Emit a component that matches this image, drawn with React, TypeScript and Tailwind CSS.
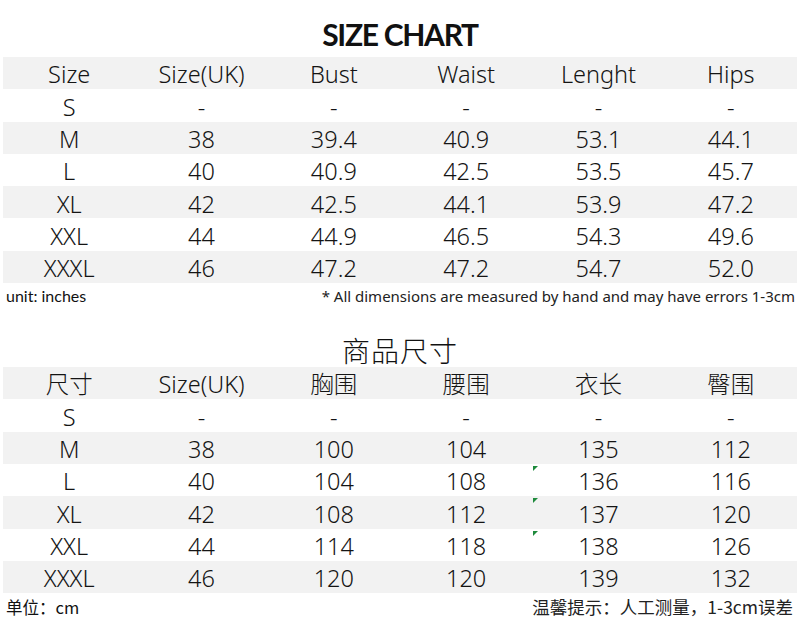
const heads = ["Size", "Size(UK)", "Bust", "Waist", "Lenght", "Hips"];
const cnHeads = ["尺寸", "Size(UK)", "胸围", "腰围", "衣长", "臀围"];

const inches = [
  ["S", "-", "-", "-", "-", "-"],
  ["M", "38", "39.4", "40.9", "53.1", "44.1"],
  ["L", "40", "40.9", "42.5", "53.5", "45.7"],
  ["XL", "42", "42.5", "44.1", "53.9", "47.2"],
  ["XXL", "44", "44.9", "46.5", "54.3", "49.6"],
  ["XXXL", "46", "47.2", "47.2", "54.7", "52.0"],
];

const cm = [
  ["S", "-", "-", "-", "-", "-"],
  ["M", "38", "100", "104", "135", "112"],
  ["L", "40", "104", "108", "136", "116"],
  ["XL", "42", "108", "112", "137", "120"],
  ["XXL", "44", "114", "118", "138", "126"],
  ["XXXL", "46", "120", "120", "139", "132"],
];

function Row({ cells, gray, marked }: { cells: string[]; gray: boolean; marked?: boolean }) {
  return (
    <div className={`grid grid-cols-6 h-[32.3px] items-center ${gray ? "bg-[#f2f2f2]" : "bg-white"}`}>
      {cells.map((c, i) => (
        <div key={i} className="relative h-full flex items-center justify-center pt-[4px]">
          {marked && i === 4 && (
            <span className="absolute left-[1px] top-[2px] w-0 h-0 border-t-[5px] border-t-[#1e8a3c] border-r-[5px] border-r-transparent" />
          )}
          <span className="leading-none">{c}</span>
        </div>
      ))}
    </div>
  );
}

function Table({ head, rows, marks }: { head: string[]; rows: string[][]; marks?: boolean }) {
  return (
    <div className="text-[23.5px] text-[#141414] font-['Noto_Sans','Noto_Sans_CJK_SC',sans-serif] font-light">
      <Row cells={head} gray />
      {rows.map((r, i) => (
        <Row key={i} cells={r} gray={i % 2 === 1} marked={marks && i >= 2 && i <= 4} />
      ))}
    </div>
  );
}

export default function App() {
  return (
    <div className="w-[800px] h-[624px] bg-white px-[3px] overflow-hidden">
      <div className="h-[57px] flex items-end justify-center pb-[8px]">
        <h1 className="text-[30px] leading-none font-bold text-[#111] font-['Lato','Liberation_Sans',sans-serif] tracking-[-1.3px]">
          SIZE CHART
        </h1>
      </div>

      <Table head={heads} rows={inches} />

      <div className="h-[26px] flex items-center justify-between pr-[2px]">
        <span className="pl-[3px] text-[16px] text-[#111] font-['Lato','Liberation_Sans',sans-serif]">unit: inches</span>
        <span className="text-[15px] text-[#222] font-['Noto_Sans',sans-serif]">* All dimensions are measured by hand and may have errors 1-3cm</span>
      </div>

      <div className="h-[58px] flex items-end justify-center pb-[3px]">
        <h2 className="text-[28px] leading-none text-[#111] font-['Noto_Sans_CJK_SC',serif] font-light tracking-[1px]">
          商品尺寸
        </h2>
      </div>

      <Table head={cnHeads} rows={cm} marks />

      <div className="h-[28px] flex items-center justify-between pr-[4px]">
        <span className="pl-[3px] text-[16.5px] text-[#111] font-['Noto_Sans_CJK_SC',sans-serif]">单位：cm</span>
        <span className="text-[17.5px] text-[#222] font-['Noto_Sans_CJK_SC',sans-serif]">温馨提示：人工测量，1-3cm误差</span>
      </div>
    </div>
  );
}
